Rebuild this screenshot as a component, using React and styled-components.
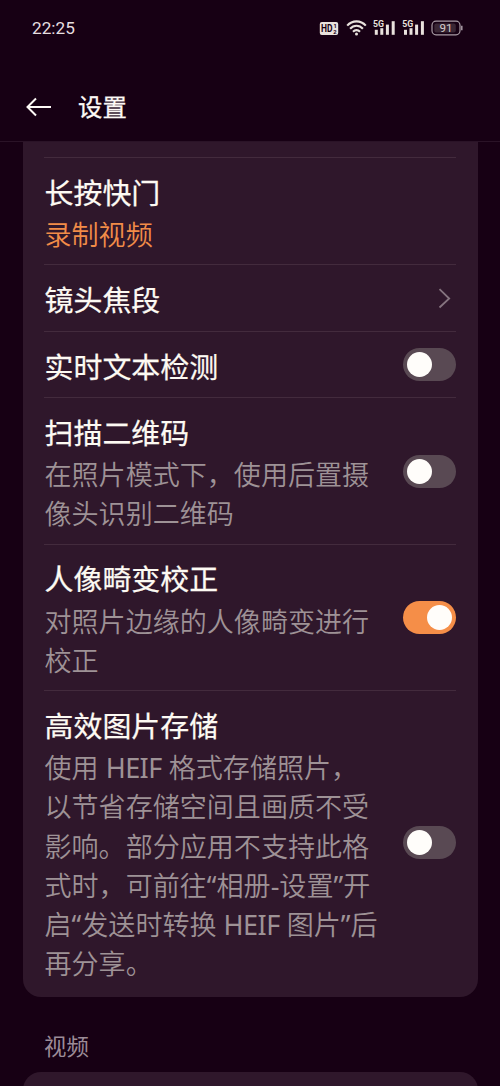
import React from "react";
import styled, { createGlobalStyle } from "styled-components";

const GlobalStyle = createGlobalStyle`
  * { box-sizing: border-box; }
  body {
    margin: 0;
    background: #170014;
    font-family: "Noto Sans", "Noto Sans CJK SC", sans-serif;
  }
`;

const Screen = styled.div`
  width: 500px;
  height: 1086px;
  overflow: hidden;
  display: flex;
  flex-direction: column;
  background: #170014;
`;

const StatusBar = styled.div`
  height: 56px;
  flex: none;
  display: flex;
  align-items: center;
  justify-content: space-between;
  padding: 0 37px 0 32px;
`;

const Clock = styled.div`
  font-family: Roboto, sans-serif;
  font-size: 17.2px;
  line-height: 20px;
  color: #e6dfe0;
`;

const StatusIcons = styled.svg`
  display: block;
  width: 144px;
  height: 20px;
`;

const Header = styled.header`
  height: 86px;
  flex: none;
  display: flex;
  align-items: center;
  gap: 26px;
  padding: 17px 25px 0;
  border-bottom: 1px solid #2a1327;
`;

const BackIcon = styled.svg`
  width: 27px;
  height: 20px;
`;

const PageTitle = styled.h1`
  margin: 0;
  font-size: 24.4px;
  line-height: 34px;
  font-weight: 400;
  color: #fdf9f6;
  -webkit-text-stroke: 0.3px #fdf9f6;
`;

const Card = styled.section`
  flex: none;
  margin: 0 22.5px;
  padding: 0 21.5px;
  background: #2f172b;
`;

const SettingsCard = styled(Card)`
  height: 855px;
  padding-top: 15px;
  border-radius: 0 0 18px 18px;
`;

const NextCard = styled(Card)`
  height: 60px;
  border-radius: 18px 18px 0 0;
`;

const Row = styled.div`
  display: flex;
  align-items: center;
  justify-content: space-between;
  min-height: 66.65px;
  padding: 13.5px 0 10.15px;
  border-top: 1px solid #432b3d;
`;

const RowTitle = styled.div`
  padding-left: 0.5px;
  font-size: 28.95px;
  line-height: 41.5px;
  white-space: nowrap;
  color: #fdfaf3;
  -webkit-text-stroke: 0.25px #fdfaf3;
`;

const RowText = styled.div`
  margin-top: 1.7px;
  padding-left: 0.5px;
  font-size: 27.05px;
  line-height: 39.3px;
  font-weight: 350;
  white-space: nowrap;
  color: ${(p) => (p.$accent ? "#f28c48" : "#9e9296")};
`;

const Latin = styled.span`
  font-weight: 400;
  letter-spacing: ${(p) => (p.$word ? "-0.55px" : "0")};
`;

const Control = styled.div`
  flex: none;
  margin-top: -3.5px;
`;

const Track = styled.div`
  width: 53px;
  height: 33px;
  padding: 4px;
  border-radius: 17px;
  display: flex;
  justify-content: ${(p) => (p.$on ? "flex-end" : "flex-start")};
  background: ${(p) => (p.$on ? "#f58e48" : "#594953")};
`;

const Knob = styled.div`
  width: 25px;
  height: 25px;
  border-radius: 50%;
  background: #fffdfa;
`;

const Chevron = styled.svg`
  display: block;
  width: 20px;
  height: 24px;
`;

const SectionLabel = styled.h2`
  margin: 0;
  height: 75px;
  flex: none;
  padding: 34px 44px 0;
  font-size: 22.4px;
  line-height: 32px;
  font-weight: 400;
  color: #9c8c98;
`;

const rows = [
  { title: "长按快门", lines: ["录制视频"], accent: true },
  { title: "镜头焦段", link: true },
  { title: "实时文本检测", on: false },
  {
    title: "扫描二维码",
    lines: ["在照片模式下，使用后置摄", "像头识别二维码"],
    on: false,
  },
  {
    title: "人像畸变校正",
    lines: ["对照片边缘的人像畸变进行", "校正"],
    on: true,
  },
  {
    title: "高效图片存储",
    lines: [
      "使用 HEIF 格式存储照片，",
      "以节省存储空间且画质不受",
      "影响。部分应用不支持此格",
      "式时，可前往“相册-设置”开",
      "启“发送时转换 HEIF 图片”后",
      "再分享。",
    ],
    on: false,
  },
];

function Signal({ x }) {
  return (
    <g transform={`translate(${x} 0)`} fill="#e9e2dd">
      <text x="-0.5" y="9" fontFamily="Roboto, sans-serif" fontWeight="700" fontSize="9.3" textLength="11" lengthAdjust="spacingAndGlyphs">5G</text>
      <rect x="1.3" y="11.8" width="3" height="5" />
      <rect x="6.8" y="10.2" width="3" height="6.6" />
      <rect x="12.4" y="6.6" width="3" height="10.2" />
      <rect x="18.2" y="3.2" width="3" height="13.6" />
    </g>
  );
}

function StatusGlyphs() {
  return (
    <StatusIcons viewBox="0 0 144 20">
      <rect x="0.8" y="4" width="18.4" height="13" rx="2" fill="#e9e2dd" />
      <g fill="#170014" fontFamily="Roboto, sans-serif" fontWeight="700">
        <text x="2" y="14.2" fontSize="10" textLength="11.5" lengthAdjust="spacingAndGlyphs">HD</text>
        <text x="14.4" y="10" fontSize="5.8">1</text>
        <text x="14.2" y="16" fontSize="5.8">2</text>
      </g>
      <g fill="none" stroke="#e9e2dd" strokeWidth="2.1">
        <path d="M28.2 7.6C33.3 1.9 41.7 1.9 46.8 7.6" />
        <path d="M31.1 10.7C34.7 6.7 40.3 6.7 43.9 10.7" />
        <path d="M34 13.8C36.1 11.5 38.9 11.5 41 13.8" />
      </g>
      <circle cx="37.5" cy="15.9" r="1.5" fill="#e9e2dd" />
      <Signal x={54.5} />
      <Signal x={83.7} />
      <rect x="113" y="3.2" width="28" height="13.6" rx="4" fill="none" stroke="#a99ba5" strokeWidth="1.2" />
      <rect x="115.3" y="5.4" width="21.5" height="9.2" rx="2" fill="#392634" />
      <path d="M142.8 7.7V12.3" stroke="#a99ba5" strokeWidth="1.5" />
      <text x="127" y="14.2" fontSize="11.6" textAnchor="middle" fontFamily="Roboto, sans-serif" fill="#d6cccd">91</text>
    </StatusIcons>
  );
}

function Toggle({ on }) {
  return (
    <Track $on={on} role="switch" aria-checked={on}>
      <Knob />
    </Track>
  );
}

function MixedText({ text }) {
  return text
    .split(/([A-Z“”-]+)/)
    .map((part, i) =>
      i % 2 ? (
        <Latin key={i} $word={part.length > 1}>
          {part}
        </Latin>
      ) : (
        part
      )
    );
}

function SettingRow({ title, lines = [], accent, link, on }) {
  return (
    <Row>
      <div>
        <RowTitle>{title}</RowTitle>
        {lines.length > 0 && (
          <RowText $accent={accent}>
            {lines.map((line) => (
              <div key={line}>
                <MixedText text={line} />
              </div>
            ))}
          </RowText>
        )}
      </div>
      {link && (
        <Control>
          <Chevron viewBox="0 0 20 24" fill="none">
            <path d="M3.5 3.2L13.2 12.5L3.5 21.5" stroke="#85747f" strokeWidth="1.8" />
          </Chevron>
        </Control>
      )}
      {on !== undefined && (
        <Control>
          <Toggle on={on} />
        </Control>
      )}
    </Row>
  );
}

export default function App() {
  return (
    <>
      <GlobalStyle />
      <Screen>
        <StatusBar>
          <Clock>22:25</Clock>
          <StatusGlyphs />
        </StatusBar>
        <Header>
          <BackIcon viewBox="0 0 27 20" fill="none">
            <path d="M26 10H3M11 1.5L2.5 10L11 18.5" stroke="#fdf9f6" strokeWidth="2" />
          </BackIcon>
          <PageTitle>设置</PageTitle>
        </Header>
        <SettingsCard>
          {rows.map((row) => (
            <SettingRow key={row.title} {...row} />
          ))}
        </SettingsCard>
        <SectionLabel>视频</SectionLabel>
        <NextCard />
      </Screen>
    </>
  );
}
